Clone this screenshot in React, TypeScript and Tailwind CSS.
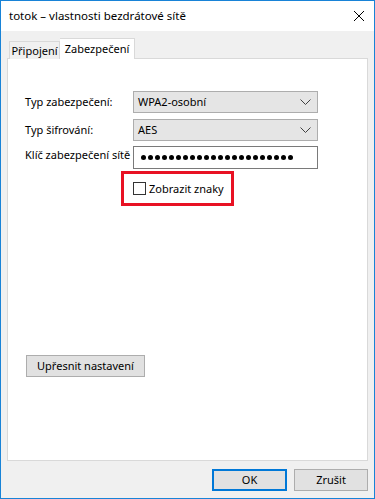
import React from "react";

const font = { fontFamily: '"Noto Sans", "Segoe UI", sans-serif' };

function Chevron() {
  return (
    <svg width="11" height="7" viewBox="0 0 11 7" className="shrink-0">
      <polyline points="0.5,0.5 5.5,5.5 10.5,0.5" fill="none" stroke="#404040" strokeWidth="1" />
    </svg>
  );
}

function Select({ value }: { value: string }) {
  return (
    <div className="flex h-[22px] w-[185px] items-center justify-between border border-[#adadad] bg-[#e5e5e5] pl-[4px] pr-[6px]">
      <span>{value}</span>
      <Chevron />
    </div>
  );
}

function Row({ label, children, top = false }: { label: string; children: React.ReactNode; top?: boolean }) {
  return (
    <div className={`flex ${top ? "items-start" : "items-center"}`}>
      <span className={`w-[108px] shrink-0 whitespace-nowrap ${top ? "pt-[1px]" : ""}`}>{label}</span>
      {children}
    </div>
  );
}

export default function App() {
  return (
    <div
      style={font}
      className="flex h-[499px] w-[375px] flex-col border border-[#1883d7] bg-[#f0f0f0] text-[11px] leading-[16px] text-black"
    >
      {/* Title bar */}
      <div className="flex h-[30px] shrink-0 items-center justify-between bg-white pl-[8px] pr-[8px]">
        <span className="text-[11.5px]">totok – vlastnosti bezdrátové sítě</span>
        <svg width="12" height="12" viewBox="0 0 12 12" className="mr-[1px]">
          <path d="M1 1 L11 11 M11 1 L1 11" stroke="#000" strokeWidth="1" />
        </svg>
      </div>

      {/* Body */}
      <div className="flex flex-1 flex-col px-[6px] pt-[7px]">
        {/* Tabs */}
        <div className="relative z-10 -mb-px flex h-[21px] items-end pl-[2px]">
          <div className="flex h-[18px] w-[51px] items-center justify-center border border-b-0 border-[#d9d9d9] bg-[#f0f0f0]">
            Připojení
          </div>
          <div className="flex h-[21px] w-[75px] items-center justify-center border border-b-0 border-l-0 border-[#d9d9d9] bg-white pb-[1px]">
            Zabezpečení
          </div>
        </div>

        {/* Panel */}
        <div className="flex h-[403px] flex-col border border-[#d9d9d9] bg-white pl-[17px] pt-[32px]">
          <div className="flex flex-col">
            <Row label="Typ zabezpečení:">
              <Select value="WPA2-osobní" />
            </Row>
            <div className="mt-[6px]">
              <Row label="Typ šifrování:">
                <Select value="AES" />
              </Row>
            </div>
            <div className="mt-[5px]">
              <Row label="Klíč zabezpečení sítě" top>
                <div className="flex h-[23px] w-[185px] items-center gap-[2px] border border-[#7a7a7a] bg-white pl-[7px]">
                  {Array.from({ length: 22 }).map((_, i) => (
                    <span key={i} className="h-[5px] w-[5px] rounded-full bg-black" />
                  ))}
                </div>
              </Row>
            </div>
            <div className="ml-[96px] mt-[2px] flex h-[35px] w-[113px] items-center border-[3px] border-[#e81123] pl-[9px]">
              <span className="h-[13px] w-[13px] shrink-0 border border-[#333] bg-white" />
              <span className="ml-[3px]">Zobrazit znaky</span>
            </div>
          </div>

          <div className="ml-[1px] mt-[149px] flex h-[22px] w-[119px] items-center justify-center border border-[#adadad] bg-[#e1e1e1]">
            Upřesnit nastavení
          </div>
        </div>

        {/* Footer */}
        <div className="mt-[8px] flex justify-end gap-[7px]">
          <div className="flex h-[22px] w-[75px] items-center justify-center border-2 border-[#0078d7] bg-[#e1e1e1]">
            OK
          </div>
          <div className="flex h-[22px] w-[74px] items-center justify-center border border-[#adadad] bg-[#e1e1e1]">
            Zrušit
          </div>
        </div>
      </div>
    </div>
  );
}
